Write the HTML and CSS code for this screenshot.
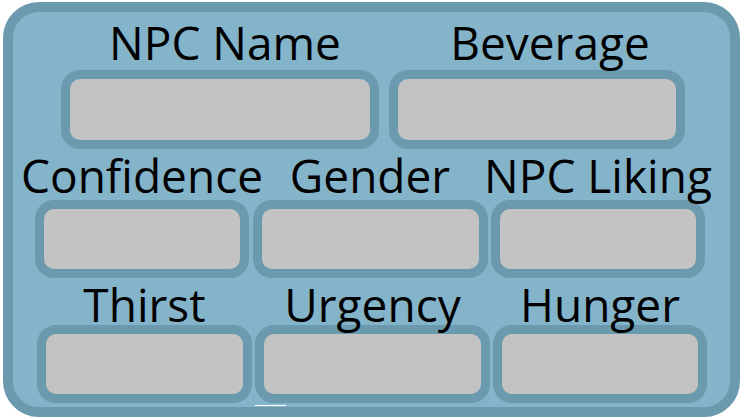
FILE: index.html
```html
<!DOCTYPE html>
<html lang="en">
<head>
<meta charset="utf-8">
<title>NPC Panel</title>
<link rel="stylesheet" href="styles.css">
</head>
<body>
<div class="panel">
  <div class="row row-1">
    <div class="field field-name"><div class="label">NPC Name</div><div class="box"></div></div>
    <div class="field field-beverage"><div class="label">Beverage</div><div class="box"></div></div>
  </div>
  <div class="row row-2">
    <div class="field"><div class="label">Confidence</div><div class="box"></div></div>
    <div class="field"><div class="label">Gender</div><div class="box"></div></div>
    <div class="field"><div class="label">NPC Liking</div><div class="box"></div></div>
  </div>
  <div class="row row-3">
    <div class="field"><div class="label">Thirst</div><div class="box"></div></div>
    <div class="field"><div class="label">Urgency</div><div class="box"></div></div>
    <div class="field"><div class="label">Hunger</div><div class="box"></div></div>
  </div>
  <div class="glitch"></div>
</div>
</body>
</html>
```
FILE: styles.css
```css
html, body {
  margin: 0;
  padding: 0;
  background: #ffffff;
}

body {
  font-family: "Open Sans", "Noto Sans", sans-serif;
  color: #000000;
}

.panel {
  position: relative;
  box-sizing: border-box;
  margin: 2px 0 0 3px;
  width: 737px;
  height: 415px;
  border: 10px solid #6b9aae;
  border-radius: 36px;
  background: #84b4ca;
  padding-top: 9px;
  display: flex;
  flex-direction: column;
  gap: 5px;
}

.row {
  display: grid;
}

.row-1 {
  padding-left: 48px;
  grid-template-columns: 318px 296px;
  column-gap: 10px;
}

.row-2 {
  padding-left: 22px;
  grid-template-columns: 214px 235px 214px;
  column-gap: 3.5px;
}

.row-3 {
  padding-left: 24px;
  grid-template-columns: 215px 235px 214px;
  column-gap: 3px;
}

.field {
  display: flex;
  flex-direction: column;
  align-items: center;
}

.label {
  position: relative;
  z-index: 1;
  font-size: 46px;
  line-height: 42px;
  height: 42px;
  white-space: nowrap;
}

.field-name .label {
  padding-left: 10px;
}

.field-beverage .label {
  padding-left: 26px;
}

.box {
  align-self: stretch;
  box-sizing: border-box;
  border: 9px solid #6b9aae;
  border-radius: 19px;
  background: #c3c3c3;
  height: 78px;
}

.row-1 .box {
  margin-top: 7px;
  height: 79px;
}

.row-2 .box {
  margin-top: 4px;
}

.row-3 .box {
  margin-top: 0;
}

.glitch {
  position: absolute;
  left: 242px;
  top: 393px;
  width: 31px;
  height: 1px;
  background: #ffffff;
}
```
